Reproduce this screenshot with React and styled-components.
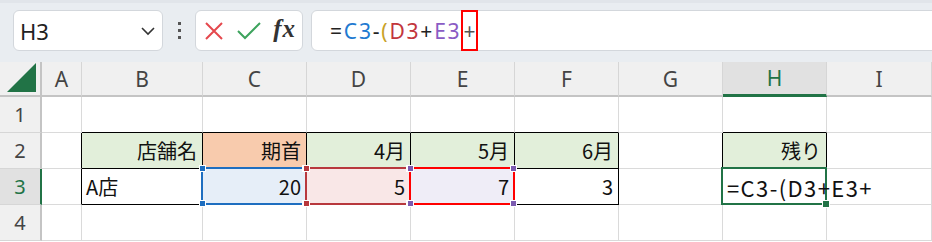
import React from "react";
import styled, { createGlobalStyle, css } from "styled-components";

const Global = createGlobalStyle`
  html, body { margin: 0; padding: 0; background: #fff; }
  body { width: 932px; height: 242px; overflow: hidden; }
`;

const Page = styled.div`
  width: 932px;
  height: 242px;
  overflow: hidden;
  font-family: "Noto Sans", "Noto Sans CJK JP", sans-serif;
`;

const Toolbar = styled.div`
  height: 62px;
  box-sizing: border-box;
  background: #e9edf1;
  border-top: 3px solid #e1e5ea;
  padding: 7px 0 0 13px;
  display: flex;
  align-items: flex-start;
`;

const Box = styled.div`
  height: 41px;
  box-sizing: border-box;
  background: #fff;
  border: 1px solid #d3d7dc;
  border-radius: 6px;
  display: flex;
  align-items: center;
`;

const NameBox = styled(Box)`
  width: 150px;
  padding: 0 6px 0 6px;
  justify-content: space-between;
  font-size: 22px;
  color: #222;
`;

const Dots = styled.div`
  width: 32px;
  height: 41px;
  display: flex;
  flex-direction: column;
  align-items: center;
  justify-content: center;
  gap: 4px;
  span {
    width: 3px;
    height: 3px;
    background: #555;
  }
`;

const ButtonBox = styled(Box)`
  width: 108px;
  padding: 0 6px 0 8px;
  justify-content: space-between;
`;

const Fx = styled.span`
  font-family: "Liberation Serif", serif;
  font-style: italic;
  font-weight: bold;
  font-size: 25px;
  letter-spacing: 1px;
  color: #333;
  margin-top: -4px;
`;

const FormulaBox = styled(Box)`
  flex: 1;
  margin-left: 8px;
  margin-right: -12px;
  padding-left: 18px;
  font-size: 21px;
  letter-spacing: 1.8px;
  color: #222;
`;

const Tok = styled.span`
  color: ${(p) => p.$c || "#222"};
`;

const MarkTok = styled.span`
  align-self: stretch;
  margin: -1px 0;
  display: flex;
  align-items: center;
  box-sizing: border-box;
  border: 2px solid #ff0000;
  padding: 0 1px 0 0;
  letter-spacing: 0;
  color: #555;
`;

const Grid = styled.div`
  display: grid;
  grid-template-columns: 42px 40px 121px repeat(6, 104px) 1fr;
  grid-template-rows: 35px repeat(4, 36px);
`;

const Corner = styled.div`
  background: #f0f0f0;
  border-right: 2px solid #c4c4c4;
  border-bottom: 2px solid #c4c4c4;
  box-sizing: border-box;
  display: flex;
  align-items: flex-end;
  justify-content: flex-end;
  padding: 0 3px 3px 0;
`;

const ColHead = styled.div`
  box-sizing: border-box;
  background: ${(p) => (p.$sel ? "#e1e1e1" : "#f0f0f0")};
  border-right: 1px solid #d6d6d6;
  border-bottom: ${(p) => (p.$sel ? "3px solid #217346" : "2px solid #c4c4c4")};
  display: flex;
  align-items: center;
  justify-content: center;
  font-size: 21px;
  color: ${(p) => (p.$sel ? "#217346" : "#444")};
`;

const RowHead = styled.div`
  box-sizing: border-box;
  background: ${(p) => (p.$sel ? "#e1e1e1" : "#f0f0f0")};
  border-right: ${(p) => (p.$sel ? "2px solid #217346" : "2px solid #c4c4c4")};
  border-bottom: 1px solid #d6d6d6;
  display: flex;
  align-items: center;
  justify-content: center;
  font-size: 20px;
  color: ${(p) => (p.$sel ? "#217346" : "#444")};
`;

const Cell = styled.div`
  position: relative;
  box-sizing: border-box;
  background: ${(p) => p.$bg || "transparent"};
  border-right: 1px solid ${(p) => p.$r || "#dadada"};
  border-bottom: 1px solid ${(p) => p.$b || "#dadada"};
  display: flex;
  align-items: center;
  justify-content: ${(p) => (p.$left ? "flex-start" : "flex-end")};
  padding: 0 ${(p) => (p.$left ? "0" : "5px")} 0 ${(p) => (p.$left ? "4px" : "0")};
  font-family: "Noto Sans CJK JP", sans-serif;
  font-size: 20px;
  color: #111;
  white-space: nowrap;
  ${(p) =>
    p.$over &&
    css`
      overflow: visible;
      z-index: 2;
      font-size: 22px;
      letter-spacing: 1.4px;
    `}
`;

const EditText = styled.span`
  position: relative;
  z-index: 5;
`;

const Sel = styled.span`
  position: absolute;
  top: -2px;
  left: -2px;
  right: -1px;
  bottom: -1px;
  border: 2px solid ${(p) => p.$c};
  pointer-events: none;
  z-index: 3;
`;

const Handle = styled.span`
  position: absolute;
  width: 5px;
  height: 5px;
  background: ${(p) => p.$c};
  border: 1px solid #fff;
  ${(p) => (p.$v === "t" ? "top: -4px;" : "bottom: -4px;")}
  ${(p) => (p.$h === "l" ? "left: -4px;" : "right: -4px;")}
`;

const FillHandle = styled.span`
  position: absolute;
  right: -5px;
  bottom: -5px;
  width: 6px;
  height: 6px;
  background: #217346;
  border: 1px solid #fff;
`;

const Selection = ({ c, h = c }) => (
  <Sel $c={c}>
    <Handle $c={h} $v="t" $h="l" />
    <Handle $c={h} $v="t" $h="r" />
    <Handle $c={h} $v="b" $h="l" />
    <Handle $c={h} $v="b" $h="r" />
  </Sel>
);

const K = "#000";
const GREEN = "#e2efda";
const cols = ["A", "B", "C", "D", "E", "F", "G", "H", "I"];

const Chevron = () => (
  <svg width="16" height="10" viewBox="0 0 16 10">
    <polyline points="2,2 8,8 14,2" fill="none" stroke="#333" strokeWidth="1.6" />
  </svg>
);

const Cross = () => (
  <svg width="20" height="20" viewBox="0 0 20 20">
    <path d="M2 2 L18 18 M18 2 L2 18" stroke="#e5484d" strokeWidth="2" fill="none" />
  </svg>
);

const Check = () => (
  <svg width="26" height="20" viewBox="0 0 26 20">
    <polyline points="2,10 9,17 24,2" fill="none" stroke="#3da35d" strokeWidth="2" />
  </svg>
);

const Triangle = () => (
  <svg width="30" height="29" viewBox="0 0 30 29">
    <polygon points="29,0 29,29 0,29" fill="#217346" />
  </svg>
);

export default function App() {
  return (
    <Page>
      <Global />
      <Toolbar>
        <NameBox>
          <span>H3</span>
          <Chevron />
        </NameBox>
        <Dots>
          <span />
          <span />
          <span />
        </Dots>
        <ButtonBox>
          <Cross />
          <Check />
          <Fx>fx</Fx>
        </ButtonBox>
        <FormulaBox>
          <Tok>=</Tok>
          <Tok $c="#1f7ad1">C3</Tok>
          <Tok>-</Tok>
          <Tok $c="#c9a227">(</Tok>
          <Tok $c="#c2363d">D3</Tok>
          <Tok>+</Tok>
          <Tok $c="#8a5bc4">E3</Tok>
          <MarkTok>+</MarkTok>
        </FormulaBox>
      </Toolbar>
      <Grid>
        <Corner>
          <Triangle />
        </Corner>
        {cols.map((c) => (
          <ColHead key={c} $sel={c === "H"}>
            {c}
          </ColHead>
        ))}

        <RowHead>1</RowHead>
        <Cell />
        <Cell $b={K} />
        <Cell $b={K} />
        <Cell $b={K} />
        <Cell $b={K} />
        <Cell $b={K} />
        <Cell />
        <Cell $b={K} />
        <Cell />

        <RowHead>2</RowHead>
        <Cell $r={K} />
        <Cell $bg={GREEN} $r={K} $b={K}>店舗名</Cell>
        <Cell $bg="#f8cbad" $r={K} $b={K}>期首</Cell>
        <Cell $bg={GREEN} $r={K} $b={K}>4月</Cell>
        <Cell $bg={GREEN} $r={K} $b={K}>5月</Cell>
        <Cell $bg={GREEN} $r={K} $b={K}>6月</Cell>
        <Cell $r={K} />
        <Cell $bg={GREEN} $r={K} $b={K}>残り</Cell>
        <Cell />

        <RowHead $sel>3</RowHead>
        <Cell $r={K} />
        <Cell $left $r={K} $b={K}>A店</Cell>
        <Cell $bg="#e6eef8" $r={K} $b={K}>
          20
          <Selection c="#1e6ec0" />
        </Cell>
        <Cell $bg="#f9e7e7" $r={K} $b={K}>
          5
          <Selection c="#b8383d" />
        </Cell>
        <Cell $bg="#efedf7" $r={K} $b={K}>
          7
          <Selection c="#ff0000" h="#7b5bb0" />
        </Cell>
        <Cell $r={K} $b={K}>3</Cell>
        <Cell />
        <Cell $left $over>
          <EditText>=C3-(D3+E3+</EditText>
          <Sel $c="#217346">
            <FillHandle />
          </Sel>
        </Cell>
        <Cell />

        <RowHead>4</RowHead>
        {cols.map((c) => (
          <Cell key={c} />
        ))}
      </Grid>
    </Page>
  );
}
